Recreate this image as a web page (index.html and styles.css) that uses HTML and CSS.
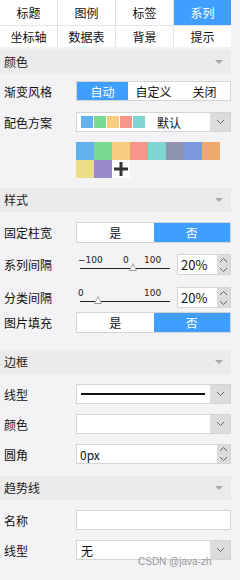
FILE: index.html
```html
<!DOCTYPE html>
<html>
<head>
    <title>系列设置</title>
    <meta name="viewport" content="width=device-width, initial-scale=1">
    <link rel="stylesheet" href="styles.css">
</head>
<body>
    <div class="panel">
        <div class="tabs">
            <div class="tab">标题</div>
            <div class="tab">图例</div>
            <div class="tab">标签</div>
            <div class="tab active">系列</div>
            <div class="tab low">坐标轴</div>
            <div class="tab low">数据表</div>
            <div class="tab low">背景</div>
            <div class="tab low">提示</div>
        </div>

        <div class="section-head first">颜色<span class="caret"></span></div>
        <div class="section s-color">
            <div class="row">
                <div class="label">渐变风格</div>
                <div class="seg three">
                    <span class="on">自动</span><span>自定义</span><span>关闭</span>
                </div>
            </div>
            <div class="row gap11">
                <div class="label">配色方案</div>
                <div class="select">
                    <div class="value swatches">
                        <i class="c1"></i><i class="c2"></i><i class="c3"></i><i class="c4"></i><i class="c5"></i>
                        <span class="name">默认</span>
                    </div>
                    <div class="drop"><svg width="9" height="6" viewBox="0 0 9 6"><polyline points="1,1 4.5,4.5 8,1" fill="none" stroke="#666" stroke-width="1"/></svg></div>
                </div>
            </div>
            <div class="palette">
                <i class="c1"></i><i class="c2"></i><i class="c3"></i><i class="c4"></i>
                <i class="c5"></i><i class="c6"></i><i class="c7"></i><i class="c8"></i>
                <i class="c9"></i><i class="c10"></i>
                <b class="add"><svg width="14" height="14" viewBox="0 0 14 14"><rect x="5.5" y="0" width="3" height="14" fill="#333"/><rect x="0" y="5.5" width="14" height="3" fill="#333"/></svg></b>
            </div>
        </div>

        <div class="section-head">样式<span class="caret"></span></div>
        <div class="section s-style">
            <div class="row tall">
                <div class="label">固定柱宽</div>
                <div class="seg two"><span>是</span><span class="on">否</span></div>
            </div>
            <div class="row tall gap11">
                <div class="label">系列间隔</div>
                <div class="slider">
                    <div class="ticks"><span class="t-min">−100</span><span class="t-mid">0</span><span class="t-max">100</span></div>
                    <div class="track"><span class="thumb at-a"></span></div>
                </div>
                <div class="spin">
                    <div class="value">20%</div>
                    <div class="arrows"><svg width="9" height="18" viewBox="0 0 9 18"><polyline points="1,6 4.5,2.5 8,6" fill="none" stroke="#666"/><polyline points="1,12 4.5,15.5 8,12" fill="none" stroke="#666"/></svg></div>
                </div>
            </div>
            <div class="row tall gap12">
                <div class="label">分类间隔</div>
                <div class="slider">
                    <div class="ticks"><span class="t-min">0</span><span class="t-max">100</span></div>
                    <div class="track"><span class="thumb at-b"></span></div>
                </div>
                <div class="spin">
                    <div class="value">20%</div>
                    <div class="arrows"><svg width="9" height="18" viewBox="0 0 9 18"><polyline points="1,6 4.5,2.5 8,6" fill="none" stroke="#666"/><polyline points="1,12 4.5,15.5 8,12" fill="none" stroke="#666"/></svg></div>
                </div>
            </div>
            <div class="row tall gap4">
                <div class="label">图片填充</div>
                <div class="seg two"><span>是</span><span class="on">否</span></div>
            </div>
        </div>

        <div class="section-head">边框<span class="caret"></span></div>
        <div class="section s-border">
            <div class="row">
                <div class="label">线型</div>
                <div class="select">
                    <div class="value"><span class="line"></span></div>
                    <div class="drop"><svg width="9" height="6" viewBox="0 0 9 6"><polyline points="1,1 4.5,4.5 8,1" fill="none" stroke="#666"/></svg></div>
                </div>
            </div>
            <div class="row">
                <div class="label">颜色</div>
                <div class="select">
                    <div class="value"></div>
                    <div class="drop"><svg width="9" height="6" viewBox="0 0 9 6"><polyline points="1,1 4.5,4.5 8,1" fill="none" stroke="#666"/></svg></div>
                </div>
            </div>
            <div class="row">
                <div class="label">圆角</div>
                <div class="spin wide">
                    <div class="value">0px</div>
                    <div class="arrows"><svg width="9" height="18" viewBox="0 0 9 18"><polyline points="1,6 4.5,2.5 8,6" fill="none" stroke="#666"/><polyline points="1,12 4.5,15.5 8,12" fill="none" stroke="#666"/></svg></div>
                </div>
            </div>
        </div>

        <div class="section-head">趋势线<span class="caret"></span></div>
        <div class="section s-trend">
            <div class="row">
                <div class="label">名称</div>
                <div class="text-input"></div>
            </div>
            <div class="row">
                <div class="label">线型</div>
                <div class="select">
                    <div class="value">无</div>
                    <div class="drop"><svg width="9" height="6" viewBox="0 0 9 6"><polyline points="1,1 4.5,4.5 8,1" fill="none" stroke="#666"/></svg></div>
                </div>
            </div>
        </div>
    </div>
    <div class="watermark">CSDN @java-zh</div>
</body>
</html>
```

FILE: styles.css
```css
/* settings panel */
body {
    margin: 0;
    background: #f3f3f5;
    font-family: "Noto Sans CJK SC", "Liberation Sans", sans-serif;
    font-size: 12px;
    color: #111;
}
.panel { width: 231px; }

.tabs {
    display: grid;
    grid-template-columns: repeat(4, 1fr);
    grid-template-rows: 25px 21px;
    gap: 1px;
    background: #e4e4e4;
}
.tab { background: #fff; display: flex; align-items: center; justify-content: center; font-size: 12px; }
.tab.active { background: #409eff; color: #fff; }

.section-head {
    position: relative;
    height: 24px;
    line-height: 24px;
    padding-left: 4px;
    background: #ebebeb;
    color: #222;
}
.section-head.first { margin-top: 3px; }
.caret {
    position: absolute;
    right: 8px;
    top: 10px;
    border-left: 4px solid transparent;
    border-right: 4px solid transparent;
    border-top: 4px solid #aaa;
}

.section { display: flex; flex-direction: column; gap: 10px; }
.s-color { padding: 7px 0 10px; }
.s-style { padding: 10px 0 17px; }
.s-border { padding: 10px 0 12px; }
.s-trend { padding: 10px 0 0; }

.row { display: flex; align-items: center; height: 20px; }
.row.tall { height: 21px; }
.row.gap11 { margin-top: 1px; }
.row.gap12 { margin-top: 2px; }
.row.gap4 { margin-top: -6px; }
.label { width: 72px; padding-left: 4px; flex: none; }

.seg {
    flex: 1;
    display: flex;
    height: 100%;
    box-sizing: border-box;
    border: 1px solid #d4d4d6;
    background: #fff;
}
.seg span { flex: 1; display: flex; align-items: center; justify-content: center; }
.seg .on { background: #409eff; color: #fff; }

.select {
    flex: 1;
    display: flex;
    height: 100%;
    box-sizing: border-box;
    border: 1px solid #d4d4d6;
    background: #fff;
}
.select .value { flex: 1; display: flex; align-items: center; padding-left: 4px; }
.select .drop { width: 20px; background: #dcdcdf; display: flex; align-items: center; justify-content: center; }
.swatches { gap: 1px; }
.swatches i { width: 12px; height: 12px; }
.swatches .name { margin-left: 11px; }
.line { width: 124px; height: 2px; background: #111; }

.palette {
    display: grid;
    grid-template-columns: repeat(8, 18px);
    grid-auto-rows: 18px;
    margin-left: 76px;
}
.add { background: #fff; display: flex; align-items: center; justify-content: center; }

.c1 { background: #62b0ec; }
.c2 { background: #79da90; }
.c3 { background: #f8cd7f; }
.c4 { background: #f79589; }
.c5 { background: #7fd5cf; }
.c6 { background: #8f93ae; }
.c7 { background: #7a98e0; }
.c8 { background: #f1a96b; }
.c9 { background: #ecdd89; }
.c10 { background: #9a88cd; }

.slider { width: 94px; margin-left: 4px; height: 100%; position: relative; }
.ticks { position: relative; height: 12px; font-family: "DejaVu Sans", sans-serif; font-size: 9px; color: #222; }
.ticks span { position: absolute; top: 1px; }
.t-min { left: -2px; }
.t-mid { left: 43px; }
.t-max { left: 64px; }
.track { position: relative; height: 1px; background: #222; margin-top: 2px; width: 90px; }
.thumb {
    position: absolute;
    top: -5px;
    width: 0;
    height: 0;
    border-left: 4px solid transparent;
    border-right: 4px solid transparent;
    border-bottom: 8px solid #999;
}
.thumb::after {
    content: '';
    position: absolute;
    left: -3px;
    top: 2px;
    border-left: 3px solid transparent;
    border-right: 3px solid transparent;
    border-bottom: 5px solid #fff;
}
.at-a { left: 49px; }
.at-b { left: 14px; }

.spin {
    margin-left: 3px;
    width: 54px;
    display: flex;
    height: 100%;
    box-sizing: border-box;
    border: 1px solid #d4d4d6;
    background: #fff;
}
.spin.wide { flex: 1; margin-left: 0; }
.spin .value { flex: 1; display: flex; align-items: center; padding-left: 3px; font-size: 13px; }
.spin.wide .value { font-size: 12px; }
.spin .arrows { width: 13px; background: #dcdcdf; display: flex; align-items: center; justify-content: center; }

.text-input { flex: 1; height: 100%; box-sizing: border-box; border: 1px solid #d4d4d6; background: #fff; }

.watermark {
    position: absolute;
    left: 138px;
    top: 556px;
    font-family: "Liberation Sans", sans-serif;
    font-size: 10px;
    color: #999;
}
```
